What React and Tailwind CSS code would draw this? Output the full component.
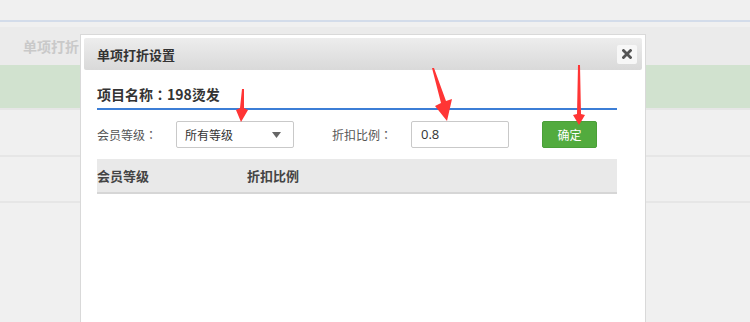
import React from 'react';

const font = { fontFamily: '"Noto Sans CJK SC", "Liberation Sans", sans-serif' };
// centered full-width colon, as the original font draws it
const Colon = () => <span style={{ fontFamily: '"Noto Sans CJK TC", sans-serif' }}>：</span>;

function Arrows() {
  return (
    <svg className="absolute left-0 top-0 pointer-events-none" width="750" height="322">
      <polygon
        fill="#ff3535"
        points="432,68 434,68 446,101 452,99 447,121 435,106 441,103"
      />
      <polygon
        fill="#ff3535"
        points="242,89 244,89 244,108 248,110 241,122 236,110 240,108"
      />
      <polygon
        fill="#ff3535"
        points="578,65 580,65 581,114 585,115 579,125 573,115 577,114"
      />
    </svg>
  );
}

export default function App() {
  return (
    <div className="relative w-[750px] h-[322px] overflow-hidden bg-[#f0f0f0]" style={font}>
      {/* page behind the dialog */}
      <div className="h-[20px]" />
      <div className="h-[2px] bg-[#d3dcea]" />
      <div className="h-[5px]" />
      <div className="h-[38px] bg-[#ebebeb] flex items-center pl-[23px]">
        <span className="text-[14px] font-bold text-[#c9c9c9] leading-none">单项打折</span>
      </div>
      <div className="h-[43px] bg-[#d1e2cf]" />
      <div className="h-[2px] bg-[#e6e6e6]" />
      <div className="h-[45px]" />
      <div className="h-[2px] bg-[#e6e6e6]" />
      <div className="h-[44px]" />
      <div className="h-[2px] bg-[#e6e6e6]" />

      {/* dialog */}
      <div className="absolute left-[80px] top-[34px] w-[566px] h-[300px] bg-white border border-[#d9d9d9] p-[3px]">
        <div className="h-[32px] rounded-[2px] bg-gradient-to-b from-[#ededed] to-[#d9d9d9] flex items-center justify-between pl-[13px] pr-[5px]">
          <span className="text-[13px] font-semibold text-[#333] leading-none">单项打折设置</span>
          <button className="w-[20px] h-[19px] rounded-[2px] bg-[#f7f7f7] flex items-center justify-center">
            <svg width="10" height="10" viewBox="0 0 10 10">
              <path d="M1.5 1.5 L8.5 8.5 M8.5 1.5 L1.5 8.5" stroke="#555" strokeWidth="2.8" strokeLinecap="square" />
            </svg>
          </button>
        </div>

        <div className="pl-[13px] w-[533px]">
          <div className="h-[37px] flex items-end pb-[6px]">
            <span className="text-[14px] font-bold text-[#333] leading-none">项目名称<Colon />198烫发</span>
          </div>
          <div className="h-[2px] bg-[#3c7ed6] mt-[1px]" />

          <div className="flex items-center mt-[11px] h-[27px] text-[12px] text-[#555]">
            <span className="w-[79px] leading-none">会员等级<Colon /></span>
            <div className="w-[118px] h-[27px] border border-[#c9c9c9] rounded-[2px] flex items-center justify-between pl-[8px] pr-[12px] text-[#333]">
              <span className="leading-none">所有等级</span>
              <svg width="9" height="6" viewBox="0 0 9 6">
                <path d="M0 0 H9 L4.5 6 Z" fill="#666" />
              </svg>
            </div>
            <span className="w-[79px] ml-[38px] leading-none">折扣比例<Colon /></span>
            <div className="w-[98px] h-[27px] border border-[#c9c9c9] rounded-[2px] flex items-center pl-[9px] text-[13px] text-[#333]" style={{ fontFamily: '"Open Sans", "Noto Sans CJK SC", sans-serif' }}>
              0.8
            </div>
            <button className="ml-[33px] w-[55px] h-[27px] rounded-[2px] bg-[#52ab3e] border border-[#4a9f38] text-white text-[12px] leading-none flex items-center justify-center">
              确定
            </button>
          </div>

          <div className="mt-[11px] h-[35px] bg-[#e9e9e9] border-b-2 border-[#d6d6d6] flex items-center text-[13px] font-bold text-[#444]">
            <span className="w-[150px] leading-none">会员等级</span>
            <span className="leading-none">折扣比例</span>
          </div>
        </div>
      </div>

      <Arrows />
    </div>
  );
}
